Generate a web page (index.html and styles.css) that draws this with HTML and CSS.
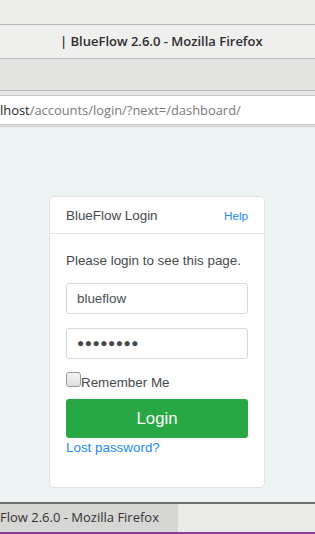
FILE: index.html
```html
<!DOCTYPE html>
<html lang="en">
<head>
    <meta charset="UTF-8">
    <meta name="viewport" content="width=device-width, initial-scale=1.0">
    <title>BlueFlow 2.6.0</title>
    <link rel="stylesheet" href="styles.css">
</head>
<body>
    <div class="window">
        <div class="top-bar"></div>
        <div class="title-bar">| BlueFlow 2.6.0 - Mozilla Firefox</div>
        <div class="tool-bar"></div>
        <div class="url-row">
            <div class="url-field"><span class="host">lhost</span>/accounts/login/?next=/dashboard/</div>
        </div>

        <div class="page">
            <div class="card">
                <div class="card-header">
                    <span>BlueFlow Login</span>
                    <a href="#" class="help">Help</a>
                </div>
                <div class="card-body">
                    <p class="lead">Please login to see this page.</p>
                    <div class="field">blueflow</div>
                    <div class="field password">&#9679;&#9679;&#9679;&#9679;&#9679;&#9679;&#9679;&#9679;</div>
                    <label class="remember"><span class="check"></span>Remember Me</label>
                    <button class="btn-login">Login</button>
                    <a href="#" class="lost">Lost password?</a>
                </div>
            </div>
        </div>

        <div class="task-bar">
            <div class="task-tab">Flow 2.6.0 - Mozilla Firefox</div>
        </div>
    </div>
</body>
</html>
```

FILE: styles.css
```css
body {
    margin: 0;
    background-color: #eef3f3;
    overflow: hidden;
}

.window {
    width: 315px;
    height: 534px;
    display: flex;
    flex-direction: column;
}

.top-bar {
    height: 24px;
    background-color: #ececeb;
    border-bottom: 1px solid #b4b4b4;
}

.title-bar {
    height: 33px;
    line-height: 33px;
    padding-left: 60px;
    background-color: #efefee;
    border-bottom: 1px solid #bdbdbd;
    font-family: "Open Sans", sans-serif;
    font-weight: 600;
    font-size: 13px;
    color: #2e2e2e;
    white-space: nowrap;
}

.tool-bar {
    height: 31px;
    background-color: #e4e4e3;
    border-bottom: 1px solid #b8b8b8;
}

.url-row {
    height: 36px;
    padding-top: 4px;
    box-sizing: border-box;
    background-color: #e8e8e7;
    border-bottom: 1px solid #c9c9c9;
}

.url-field {
    height: 28px;
    line-height: 28px;
    background: white;
    border-top: 1px solid #c4c4c4;
    border-bottom: 1px solid #c4c4c4;
    font-family: "Open Sans", sans-serif;
    font-size: 12.9px;
    color: #7a7a7a;
    white-space: nowrap;
}

.url-field .host {
    color: #2a2a2a;
}

.page {
    flex: 1;
    background-color: #eef3f3;
    padding: 69px 0 0 49px;
}

.card {
    width: 214px;
    background: white;
    border: 1px solid #dfe3e5;
    border-radius: 5px;
    font-family: "Liberation Sans", Arial, sans-serif;
    font-size: 13.4px;
    color: #464a4e;
}

.card-header {
    height: 36px;
    padding: 0 16px;
    display: flex;
    justify-content: space-between;
    align-items: center;
    border-bottom: 1px solid #dfe3e5;
}

.help {
    color: #1a8cff;
    font-size: 11.7px;
    text-decoration: none;
}

.card-body {
    padding: 17px 16px 29px;
}

.lead {
    margin: 0 0 12px;
    line-height: 20px;
}

.field {
    height: 29px;
    line-height: 29px;
    padding: 0 10px;
    margin-bottom: 14px;
    border: 1px solid #d6d9dd;
    border-radius: 3px;
    color: #495057;
}

.password {
    letter-spacing: 0.5px;
    font-size: 12px;
    color: #444a50;
    margin-bottom: 11px;
}

.remember {
    display: flex;
    align-items: flex-start;
    height: 20px;
    line-height: 25px;
    color: #464a4e;
}

.check {
    width: 13px;
    height: 13px;
    margin-top: 2px;
    border: 1px solid #9b9b9b;
    border-radius: 3px;
    background: linear-gradient(#f4f4f4, #dedede);
}

.btn-login {
    display: block;
    width: 100%;
    height: 39px;
    margin-top: 9px;
    padding: 0;
    border: none;
    border-radius: 3px;
    background-color: #28a745;
    color: white;
    font-family: "Liberation Sans", Arial, sans-serif;
    font-size: 16.7px;
}

.lost {
    display: block;
    line-height: 20px;
    color: #1a8cff;
    text-decoration: none;
}

.task-bar {
    height: 32px;
    border-top: 2px solid #6e6e6e;
    border-bottom: 2px solid #8a3b9a;
    background-color: #ebebea;
    box-sizing: border-box;
    display: flex;
}

.task-tab {
    width: 178px;
    background-color: #d6d6d5;
    line-height: 27px;
    font-family: "Open Sans", sans-serif;
    font-size: 13px;
    color: #333;
    white-space: nowrap;
    overflow: hidden;
}
```
